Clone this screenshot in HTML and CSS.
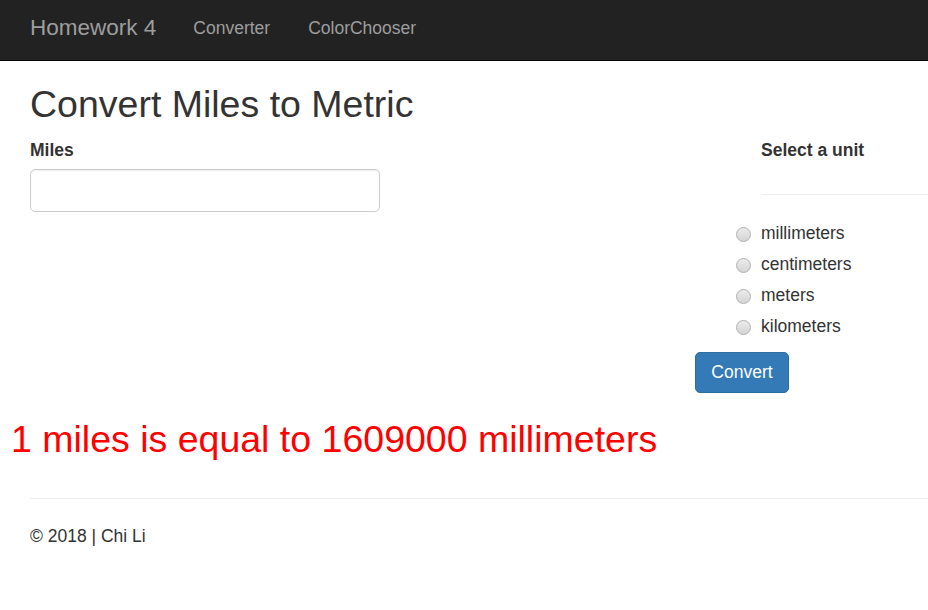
FILE: index.html
```html
<!DOCTYPE html>
<html lang="en">
<head>
<meta charset="utf-8">
<title>Homework 4</title>
<link rel="stylesheet" href="styles.css">
</head>
<body>
<nav class="navbar">
  <a class="brand" href="#">Homework 4</a>
  <a class="nav-link" href="#">Converter</a>
  <a class="nav-link" href="#">ColorChooser</a>
</nav>
<main class="container">
  <h1 class="title">Convert Miles to Metric</h1>
  <form class="row">
    <div class="col-left">
      <label class="field-label" for="miles">Miles</label>
      <input class="text-input" id="miles" type="text">
    </div>
    <div class="col-right">
      <label class="field-label unit-label">Select a unit</label>
      <hr class="unit-rule">
      <div class="radio-list">
        <label class="radio"><input type="radio" name="unit" class="radio-input"><span>millimeters</span></label>
        <label class="radio"><input type="radio" name="unit" class="radio-input"><span>centimeters</span></label>
        <label class="radio"><input type="radio" name="unit" class="radio-input"><span>meters</span></label>
        <label class="radio"><input type="radio" name="unit" class="radio-input"><span>kilometers</span></label>
      </div>
      <button type="button" class="btn">Convert</button>
    </div>
  </form>
</main>
<p class="result">1 miles is equal to 1609000 millimeters</p>
<footer class="container footer">
  <hr class="footer-rule">
  <p class="copy">© 2018 | Chi Li</p>
</footer>
</body>
</html>
```
FILE: styles.css
```css
html, body {
  margin: 0;
  padding: 0;
  overflow: hidden;
}
body {
  font-family: "Liberation Sans", Arial, sans-serif;
  font-size: 17.5px;
  line-height: 25px;
  color: #333;
  background: #fff;
}
.navbar {
  display: flex;
  align-items: flex-start;
  box-sizing: border-box;
  height: 61px;
  padding: 15px 0 0 11px;
  background: #222;
  border-bottom: 1px solid #080808;
}
.brand {
  font-size: 22.5px;
  line-height: 25px;
  color: #9d9d9d;
  text-decoration: none;
  padding: 0 18px 0 19px;
}
.nav-link {
  font-size: 17.5px;
  line-height: 25px;
  color: #9d9d9d;
  text-decoration: none;
  padding: 1px 19px 0;
}
.nav-link + .nav-link {
  padding-left: 19px;
}
.container {
  padding-left: 30px;
}
.title {
  font-size: 37.5px;
  line-height: 41px;
  font-weight: normal;
  margin: 23px 0 13px;
}
.row {
  display: flex;
  margin: 0;
}
.col-left {
  flex: 0 0 665px;
  display: flex;
  flex-direction: column;
  align-items: flex-start;
}
.col-right {
  flex: 1;
  display: flex;
  flex-direction: column;
  align-items: flex-start;
}
.field-label {
  font-weight: bold;
  display: block;
  margin-bottom: 6px;
}
.text-input {
  width: 350px;
  height: 43px;
  box-sizing: border-box;
  border: 1px solid #ccc;
  border-radius: 5px;
  box-shadow: inset 0 1px 1px rgba(0,0,0,0.075);
  font: inherit;
  padding: 7px 15px;
}
.unit-label {
  margin-left: 66px;
}
.unit-rule {
  align-self: stretch;
  margin: 25px 0 26px 66px;
  border: 0;
  border-top: 1px solid #eee;
}
.radio-list {
  display: flex;
  flex-direction: column;
  gap: 6px;
  margin-left: 41px;
}
.radio {
  display: flex;
  align-items: center;
  line-height: 25px;
  cursor: pointer;
}
.radio-input {
  appearance: none;
  -webkit-appearance: none;
  width: 15px;
  height: 15px;
  margin: 1px 10px 0 0;
  border-radius: 50%;
  border: 1px solid #b0b0b0;
  background: linear-gradient(#ececec, #d4d4d4);
  box-sizing: border-box;
}
.btn {
  margin-top: 13px;
  width: 94px;
  height: 41px;
  font: inherit;
  color: #fff;
  background: #337ab7;
  border: 1px solid #2e6da4;
  border-radius: 5px;
  padding: 0;
}
.result {
  margin: 26px 0 0 11px;
  font-size: 37.5px;
  line-height: 41px;
  color: #f00;
}
.footer-rule {
  margin: 38px 0 25px;
  border: 0;
  border-top: 1px solid #eee;
}
.copy {
  margin: 0;
}
```
